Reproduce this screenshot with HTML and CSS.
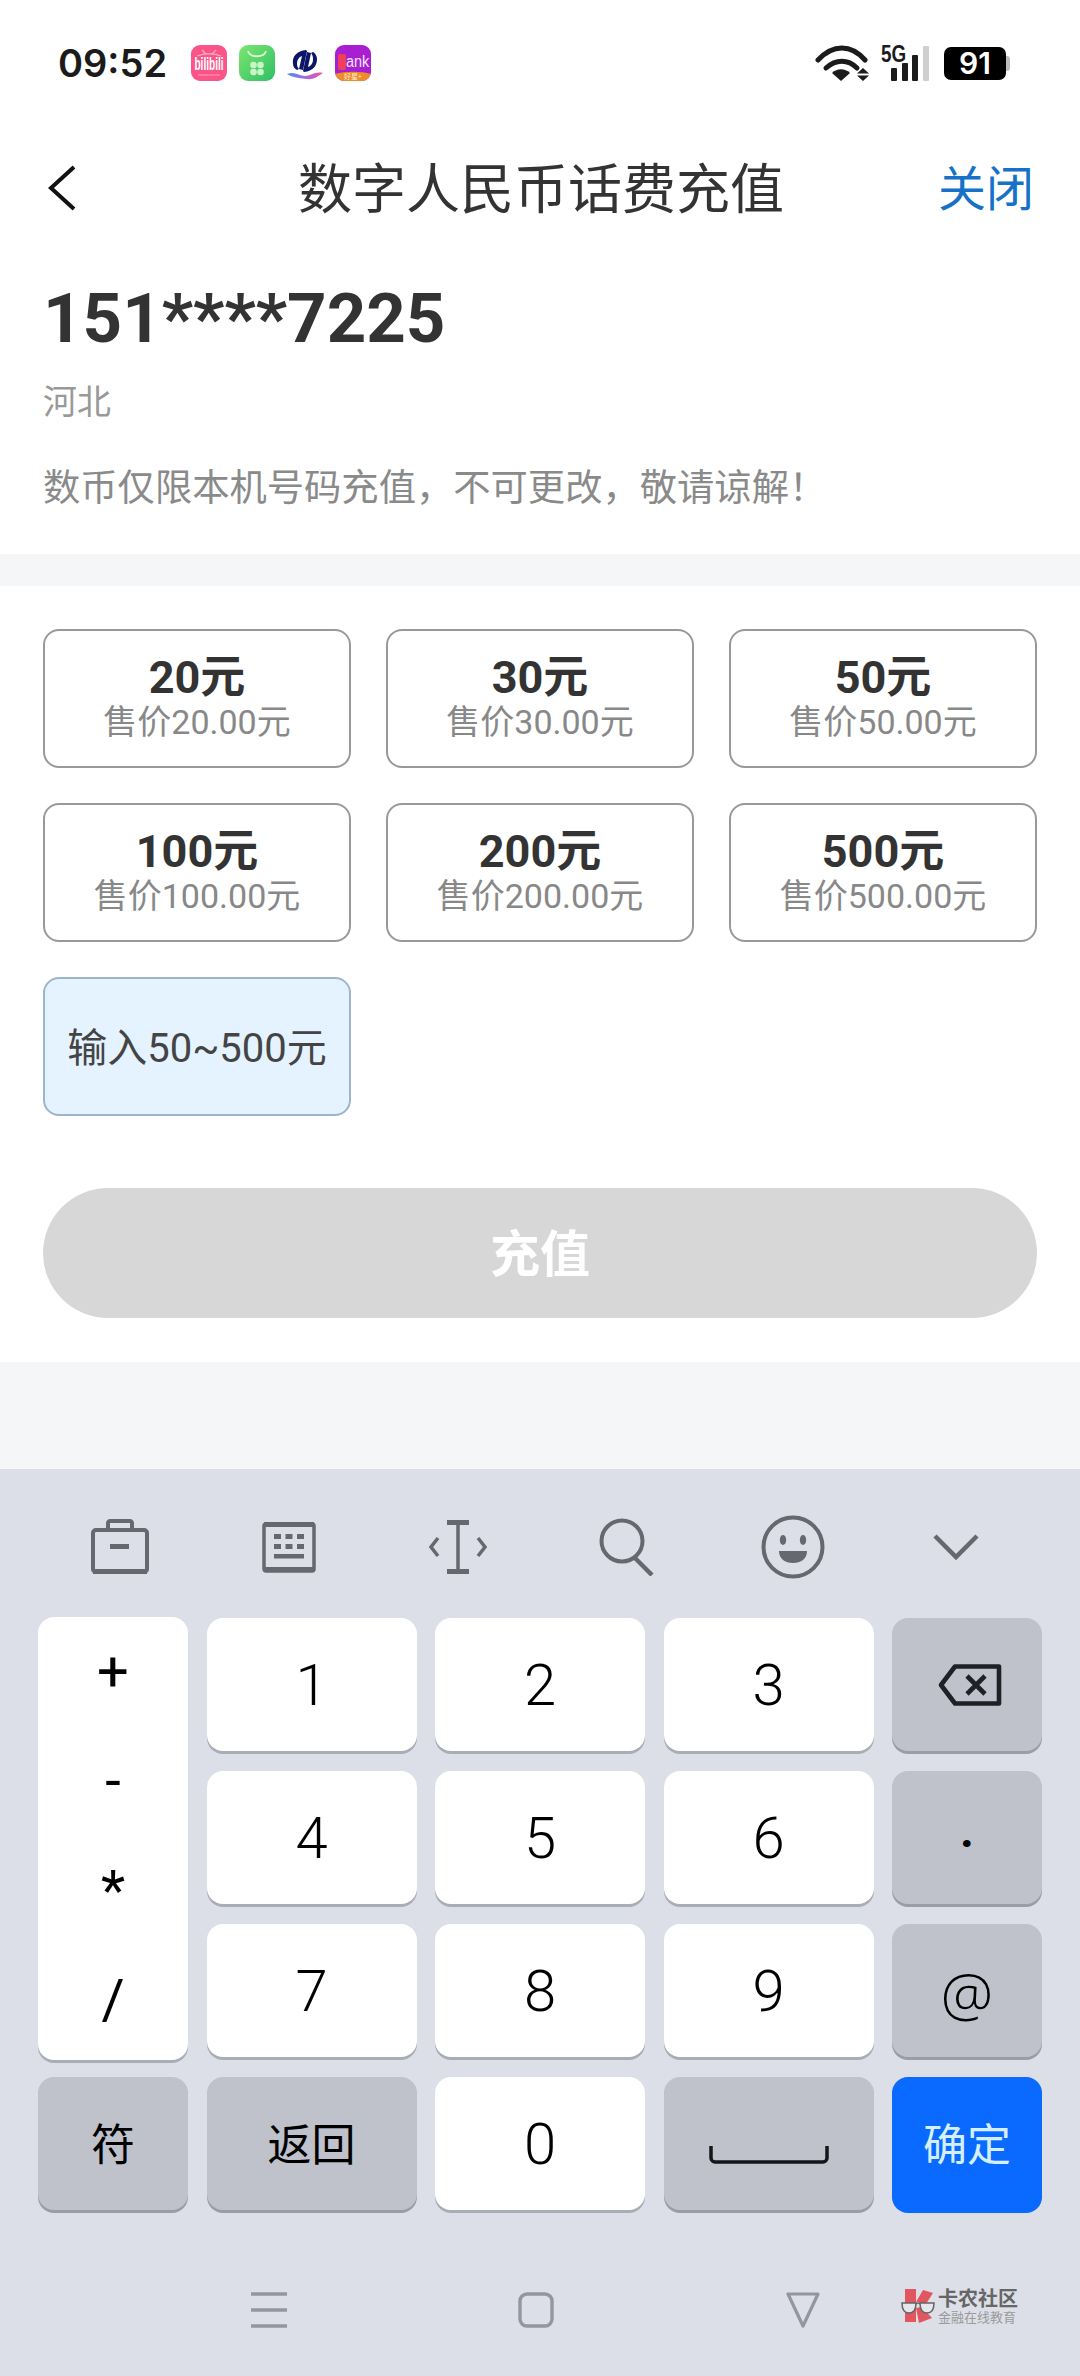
FILE: index.html
```html
<!DOCTYPE html>
<html lang="zh-CN">
<head>
    <meta charset="UTF-8">
    <meta name="viewport" content="width=device-width, initial-scale=1.0">
    <title>数字人民币话费充值</title>
    <link rel="stylesheet" href="styles.css">
</head>
<body>
    <div class="status-bar">
        <span class="time">09:52</span>
        <div class="app-icons">
            <svg width="36" height="36" viewBox="0 0 36 36">
                <rect width="36" height="36" rx="9" fill="#fb5488"/>
                <path d="M11 5l4 4M25 5l-4 4M6 11c8-3 16-3 24 0" stroke="#ffa5c2" stroke-width="1.3" fill="none"/>
                <text transform="translate(18 25) scale(.56 1)" class="bili-text">bilibili</text>
                <path d="M7 30h22" stroke="#ff9dbd" stroke-width="1"/>
            </svg>
            <svg width="36" height="36" viewBox="0 0 36 36">
                <defs>
                    <linearGradient id="greenGrad" x1="0" y1="0" x2="1" y2="1">
                        <stop offset="0" stop-color="#7ce66f"/>
                        <stop offset="1" stop-color="#2fbf66"/>
                    </linearGradient>
                </defs>
                <rect width="36" height="36" rx="9" fill="url(#greenGrad)"/>
                <path d="M9 6c2 7 16 7 18 0" stroke="#d7f8d0" stroke-width="1.8" fill="none"/>
                <circle cx="14.5" cy="20" r="3.3" fill="#c9f4c8"/>
                <circle cx="21.5" cy="20" r="3.3" fill="#c9f4c8"/>
                <circle cx="14.5" cy="27" r="3.3" fill="#c9f4c8"/>
                <circle cx="21.5" cy="27" r="3.3" fill="#c9f4c8"/>
            </svg>
            <svg width="36" height="36" viewBox="0 0 36 36">
                <defs>
                    <linearGradient id="waveGrad" x1="0" y1="0" x2="1" y2="0">
                        <stop offset="0" stop-color="#4f8ff0"/>
                        <stop offset=".5" stop-color="#a46be0"/>
                        <stop offset="1" stop-color="#f0559a"/>
                    </linearGradient>
                </defs>
                <path d="M19 5C10 6 5 11 6 19c0 3 2 5 4 6l2-1c-2-2-2-4-2-6 0-3 2-6 5-7l-3 13 4 1 4-19z" fill="#0b1668"/>
                <path d="M17 27c9-1 13-6 13-13 0-3-2-6-4-7l-2 1c2 2 2 5 2 7 0 3-2 6-5 7l3-14-4-1-4 19z" fill="#0b1668"/>
                <path d="M0 29c8-3 12 2 18 2s10-5 18-3c-5 3-8 7-17 6S5 32 0 29z" fill="url(#waveGrad)"/>
            </svg>
            <svg width="36" height="36" viewBox="0 0 36 36">
                <defs>
                    <clipPath id="bankClip"><rect width="36" height="36" rx="9"/></clipPath>
                </defs>
                <g clip-path="url(#bankClip)">
                    <rect width="36" height="36" fill="#a81fd2"/>
                    <path d="M0 29c10-3 26-3 36 0v7H0z" fill="#ee8c2c"/>
                    <rect x="3" y="9" width="8" height="16" rx="2" fill="#ef3f5e"/>
                    <text transform="translate(11 22) scale(.85 1)" class="bank-text">ank</text>
                    <text x="18" y="34" class="bank-sub">好星+</text>
                </g>
            </svg>
        </div>
        <div class="status-right">
            <svg width="115" height="50" viewBox="0 -6 115 50">
                <path d="M3 16c15-16 33-16 47 0" class="wifi-arc"/>
                <path d="M11 24c10-9 22-9 31 0" class="wifi-arc"/>
                <path d="M26 37l-9-8c5-5 13-5 18 0z" fill="#1b1b1b"/>
                <path d="M48 24l-6 5.5h12zM48 37l-6-5.5h12z" fill="#1b1b1b"/>
                <text transform="translate(66 18) scale(.82 1)" class="five-g">5G</text>
                <rect x="76" y="24" width="6" height="13" rx="1" fill="#1b1b1b"/>
                <rect x="87" y="19" width="6" height="18" rx="1" fill="#1b1b1b"/>
                <rect x="97" y="11" width="6" height="26" rx="1" fill="#1b1b1b"/>
                <rect x="108" y="2" width="6" height="35" rx="1" fill="#cfcfcf"/>
            </svg>
            <div class="battery">
                <span class="battery-body">91</span>
                <span class="battery-nub"></span>
            </div>
        </div>
    </div>

    <div class="nav">
        <svg class="back" width="30" height="46" viewBox="0 0 30 46">
            <path d="M26 2L3 23l23 21" fill="none" stroke="#111" stroke-width="4"/>
        </svg>
        <div class="nav-title">数字人民币话费充值</div>
        <div class="nav-close">关闭</div>
    </div>

    <div class="info">
        <div class="phone">151****7225</div>
        <div class="region">河北</div>
        <div class="notice">数币仅限本机号码充值，不可更改，敬请谅解！</div>
    </div>

    <div class="recharge">
        <div class="amounts">
            <div class="amount"><strong>20元</strong><span>售价20.00元</span></div>
            <div class="amount"><strong>30元</strong><span>售价30.00元</span></div>
            <div class="amount"><strong>50元</strong><span>售价50.00元</span></div>
            <div class="amount"><strong>100元</strong><span>售价100.00元</span></div>
            <div class="amount"><strong>200元</strong><span>售价200.00元</span></div>
            <div class="amount"><strong>500元</strong><span>售价500.00元</span></div>
            <div class="amount amount-input">输入50~500元</div>
        </div>
        <div class="submit">充值</div>
    </div>

    <div class="spacer"></div>

    <div class="keyboard">
        <div class="toolbar">
            <svg width="58" height="56" viewBox="0 0 58 56" class="tool">
                <path d="M17 11V4c0-1 1-2 2-2h20c1 0 2 1 2 2v7" fill="none" stroke-width="4"/>
                <rect x="2" y="11" width="54" height="42" rx="3" fill="none" stroke-width="4"/>
                <rect x="2" y="50" width="54" height="5" class="solid"/>
                <rect x="19" y="25" width="19" height="5" class="solid"/>
            </svg>
            <svg width="54" height="52" viewBox="0 0 54 52" class="tool">
                <rect x="2" y="3" width="50" height="47" rx="2" fill="none" stroke-width="3.5"/>
                <rect x="2" y="1" width="50" height="5" class="solid"/>
                <rect x="2" y="46" width="50" height="5" class="solid"/>
                <rect x="12" y="13" width="7" height="5" class="solid"/>
                <rect x="23.5" y="13" width="7" height="5" class="solid"/>
                <rect x="35" y="13" width="7" height="5" class="solid"/>
                <rect x="12" y="23" width="7" height="5" class="solid"/>
                <rect x="23.5" y="23" width="7" height="5" class="solid"/>
                <rect x="35" y="23" width="7" height="5" class="solid"/>
                <rect x="12" y="33" width="30" height="4.5" class="solid"/>
            </svg>
            <svg width="60" height="54" viewBox="0 0 60 54" class="tool">
                <path d="M30 3v48" fill="none" stroke-width="3.5"/>
                <rect x="19" y="0" width="22" height="5" class="solid"/>
                <rect x="19" y="49" width="22" height="5" class="solid"/>
                <path d="M10 18L3 27l7 9M50 18l7 9-7 9" fill="none" stroke-width="3.5"/>
            </svg>
            <svg width="56" height="58" viewBox="0 0 56 58" class="tool">
                <circle cx="23" cy="23" r="20.5" fill="none" stroke-width="4"/>
                <path d="M35 39l18 18" fill="none" stroke-width="4.5"/>
            </svg>
            <svg width="64" height="64" viewBox="0 0 64 64" class="tool tool-smile">
                <circle cx="32" cy="32" r="29.5" fill="none" stroke-width="4"/>
                <ellipse cx="22" cy="25" rx="3.2" ry="5" class="solid"/>
                <ellipse cx="42" cy="25" rx="3.2" ry="5" class="solid"/>
                <path d="M18 36h28c0 8-6 12-14 12s-14-4-14-12z" class="solid"/>
            </svg>
            <svg width="48" height="28" viewBox="0 0 48 28" class="tool tool-hide">
                <path d="M3 3l21 21L45 3" fill="none" stroke-width="4.5"/>
            </svg>
        </div>

        <div class="keys">
            <div class="key key-symbols">
                <span>+</span>
                <span>-</span>
                <span>*</span>
                <span>/</span>
            </div>
            <div class="key">1</div>
            <div class="key">2</div>
            <div class="key">3</div>
            <div class="key key-grey">
                <svg width="64" height="42" viewBox="0 0 64 42" class="delete-icon">
                    <path d="M17 2.5h44v37H17L3 21z" fill="none" stroke="#1e2226" stroke-width="4.6" stroke-linejoin="round"/>
                    <path d="M29 12l18 18M47 12L29 30" fill="none" stroke="#1e2226" stroke-width="4.6"/>
                </svg>
            </div>
            <div class="key">4</div>
            <div class="key">5</div>
            <div class="key">6</div>
            <div class="key key-grey key-dot">.</div>
            <div class="key">7</div>
            <div class="key">8</div>
            <div class="key">9</div>
            <div class="key key-grey key-at">@</div>
            <div class="key key-grey key-cn">符</div>
            <div class="key key-grey key-cn">返回</div>
            <div class="key">0</div>
            <div class="key key-grey">
                <svg width="120" height="20" viewBox="0 0 120 20" class="space-icon">
                    <path d="M2 1v12c0 2 2 4 4 4h108c2 0 4-2 4-4V1" fill="none" stroke="#14161a" stroke-width="3.5"/>
                </svg>
            </div>
            <div class="key key-blue key-cn">确定</div>
        </div>

        <div class="system-nav">
            <svg width="36" height="36" viewBox="0 0 36 36">
                <path d="M0 2h36M0 18h36M0 34h36" stroke="#94969f" stroke-width="3.6"/>
            </svg>
            <svg width="36" height="36" viewBox="0 0 36 36">
                <rect x="2" y="2" width="32" height="32" rx="7" fill="none" stroke="#94969f" stroke-width="3.4"/>
            </svg>
            <svg width="36" height="36" viewBox="0 0 36 36">
                <path d="M3 2h30L18 34z" fill="none" stroke="#94969f" stroke-width="3.2" stroke-linejoin="round"/>
            </svg>
        </div>

        <div class="watermark">
            <svg width="36" height="36" viewBox="0 0 36 36">
                <path d="M4 1h11v33H4zM15 14L22 2l10 3-7 11zM15 20l6-1 10 11-13 5z" fill="#e1565f"/>
                <path d="M1 15h14c0 6-2 10-7 10s-7-4-7-10zM19 15h14c0 6-2 10-7 10s-7-4-7-10z" fill="#e6e7ec" stroke="#666" stroke-width="1.5"/>
                <path d="M15 16c1-1 3-1 4 0" fill="none" stroke="#666" stroke-width="1.5"/>
            </svg>
            <div class="watermark-text">
                <strong>卡农社区</strong>
                <span>金融在线教育</span>
            </div>
        </div>
    </div>
</body>
</html>
```

FILE: styles.css
```css
* {
    box-sizing: border-box;
}
html, body {
    margin: 0;
    padding: 0;
}
body {
    width: 1080px;
    height: 2376px;
    overflow: hidden;
    display: flex;
    flex-direction: column;
    font-family: Roboto, "Noto Sans CJK SC", sans-serif;
    background-color: #f5f6f8;
    color: #333;
}

/* status bar */
.status-bar {
    height: 126px;
    padding: 0 70px 0 58px;
    display: flex;
    align-items: center;
    background: white;
}
.time {
    font-family: Inter, sans-serif;
    font-size: 38px;
    font-weight: 600;
    color: #1b1b1b;
    width: 133px;
}
.app-icons {
    display: flex;
    gap: 12px;
}
.bili-text {
    font-family: "Liberation Sans", sans-serif;
    font-size: 18px;
    font-weight: bold;
    fill: white;
    text-anchor: middle;
}
.bank-text {
    font-family: "Liberation Sans", sans-serif;
    font-size: 17px;
    fill: #f8e6ff;
}
.bank-sub {
    font-family: "Noto Sans CJK SC", sans-serif;
    font-size: 7px;
    fill: #ffeccc;
    text-anchor: middle;
}
.status-right {
    margin-left: auto;
    display: flex;
    align-items: center;
    gap: 14px;
}
.wifi-arc {
    fill: none;
    stroke: #1b1b1b;
    stroke-width: 5;
    stroke-linecap: round;
}
.five-g {
    font-family: "Liberation Sans", sans-serif;
    font-size: 23px;
    font-weight: bold;
    fill: #1b1b1b;
}
.battery {
    display: flex;
    align-items: center;
}
.battery-body {
    width: 62px;
    height: 33px;
    border-radius: 7px;
    background: black;
    color: white;
    font-family: Inter, sans-serif;
    font-size: 30px;
    font-weight: 600;
    line-height: 33px;
    text-align: center;
}
.battery-nub {
    width: 4px;
    height: 15px;
    background: #bbb;
    border-radius: 0 3px 3px 0;
}

/* title */
.nav {
    height: 124px;
    padding: 0 46px 0 48px;
    display: grid;
    grid-template-columns: 1fr auto 1fr;
    align-items: center;
    background: white;
}
.nav-title {
    margin-bottom: 6px;
    font-size: 54px;
    color: #333;
}
.nav-close {
    margin-bottom: 6px;
    font-size: 48px;
    color: #1572c8;
    text-align: right;
}

/* phone number block */
.info {
    padding: 24px 43px 41px;
    background: white;
}
.phone {
    font-size: 69px;
    font-weight: bold;
    line-height: 90px;
    color: #333;
}
.region {
    margin-top: 13px;
    font-size: 34px;
    line-height: 50px;
    color: #999;
}
.notice {
    margin-top: 36px;
    font-size: 37.3px;
    line-height: 50px;
    color: #8a8a8a;
}

/* amounts */
.recharge {
    margin-top: 32px;
    padding: 43px 43px 44px;
    background: white;
}
.amounts {
    display: grid;
    grid-template-columns: repeat(3, 308px);
    grid-auto-rows: 139px;
    gap: 35px;
}
.amount {
    border: 2px solid #999;
    border-radius: 16px;
    display: flex;
    flex-direction: column;
    align-items: center;
    justify-content: center;
}
.amount strong {
    font-size: 45px;
    line-height: 46px;
    color: #333;
}
.amount span {
    font-size: 34px;
    line-height: 42px;
    color: #888;
}
.amount-input {
    padding-bottom: 4px;
    background-color: #e4f3ff;
    border-color: #9db5c9;
    font-size: 40px;
    color: #444;
}
.submit {
    margin-top: 72px;
    height: 130px;
    padding-bottom: 6px;
    border-radius: 65px;
    background-color: #d7d7d7;
    color: white;
    font-size: 50px;
    font-weight: bold;
    display: flex;
    align-items: center;
    justify-content: center;
}
.spacer {
    height: 107px;
}

/* keyboard */
.keyboard {
    position: relative;
    flex: 1;
    background-color: #dcdfe7;
}
.toolbar {
    height: 149px;
    padding: 6px 0 0 35px;
    display: grid;
    grid-template-columns: repeat(6, 169px);
    align-items: center;
    justify-items: center;
}
.tool {
    stroke: #66676f;
}
.tool .solid {
    fill: #66676f;
    stroke: none;
}
.tool-smile {
    margin-right: 5px;
}
.tool-hide {
    margin-right: 17px;
}
.keys {
    padding: 0 38px;
    display: grid;
    grid-template-columns: 150px repeat(3, 210px) 150px;
    grid-auto-rows: 133px;
    column-gap: 18.5px;
    row-gap: 20px;
}
.key {
    background: white;
    border-radius: 16px;
    box-shadow: 0 3px 0 #a9adb5;
    display: flex;
    align-items: center;
    justify-content: center;
    font-size: 58px;
    font-weight: 350;
    color: #000;
}
.key-symbols {
    grid-row: span 3;
    margin: -1px 0 -3px;
    padding-bottom: 5px;
    flex-direction: column;
    justify-content: space-around;
    font-size: 56px;
    font-weight: 400;
}
.key-grey {
    background-color: #bfc2cb;
    box-shadow: 0 3px 0 #9a9da6;
}
.key-dot {
    font-size: 48px;
    font-weight: bold;
    padding-bottom: 14px;
}
.key-at {
    font-family: "Open Sans", sans-serif;
    font-size: 59px;
    padding-top: 4px;
}
.key-cn {
    padding-bottom: 4px;
    font-size: 44px;
    font-weight: 400;
}
.key-blue {
    background-color: #0a69ff;
    box-shadow: 0 3px 0 #0a69ff;
    color: #d4f0ff;
}
.delete-icon {
    margin-left: 5px;
}
.space-icon {
    margin-top: 22px;
}
.system-nav {
    margin-top: 82px;
    padding-left: 135px;
    display: grid;
    grid-template-columns: repeat(3, 267px);
    justify-items: center;
}

/* watermark sits over the navigation bar */
.watermark {
    position: absolute;
    left: 901px;
    top: 819px;
    display: flex;
    align-items: center;
    gap: 1px;
}
.watermark-text {
    display: flex;
    flex-direction: column;
    line-height: 1;
}
.watermark-text strong {
    font-size: 20px;
    color: #666;
}
.watermark-text span {
    margin-top: 2px;
    font-size: 13px;
    color: #9a9a9a;
}
```
